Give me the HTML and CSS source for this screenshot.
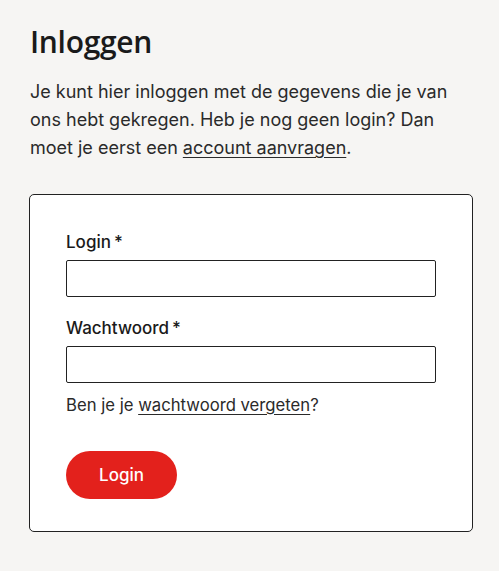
FILE: index.html
```html
<!DOCTYPE html>
<html lang="nl">
<head>
<meta charset="utf-8">
<title>Inloggen</title>
<link rel="stylesheet" href="styles.css">
</head>
<body>
<main class="page">
  <h1 class="title">Inloggen</h1>
  <p class="intro">Je kunt hier inloggen met de gegevens die je van ons hebt gekregen. Heb je nog geen login? Dan moet je eerst een <a href="#" class="link">account aanvragen</a>.</p>
  <form class="card">
    <label class="label" for="login">Login<span class="req">*</span></label>
    <input class="field" id="login" type="text">
    <label class="label label-second" for="pw">Wachtwoord<span class="req">*</span></label>
    <input class="field" id="pw" type="password">
    <p class="forgot">Ben je je <a href="#" class="link">wachtwoord vergeten</a>?</p>
    <button class="btn" type="button">Login</button>
  </form>
</main>
</body>
</html>
```
FILE: styles.css
```css
html, body {
  margin: 0;
  padding: 0;
  background: #f6f5f3;
}
body {
  font-family: Inter, "Noto Sans", sans-serif;
  color: #222;
}
.page {
  padding: 22px 26px 0 30px;
  display: flex;
  flex-direction: column;
}
.title {
  margin: 0;
  font-family: "Open Sans", sans-serif;
  font-weight: 600;
  font-size: 30px;
  line-height: 40px;
  color: #1a1a1a;
  letter-spacing: -0.3px;
}
.intro {
  margin: 16px 0 0;
  max-width: 440px;
  font-size: 18px;
  line-height: 28px;
  color: #2a2a2a;
}
.link {
  color: inherit;
  text-decoration: underline;
  text-underline-offset: 3px;
}
.card {
  margin: 32px 0 0 -1px;
  width: 444px;
  box-sizing: border-box;
  background: #fff;
  border: 1px solid #222;
  border-radius: 5px;
  padding: 36px 36px 32px;
  display: flex;
  flex-direction: column;
}
.label {
  font-size: 17px;
  font-weight: 500;
  line-height: 22px;
  color: #1a1a1a;
  margin-bottom: 7px;
}
.label-second {
  margin-top: 20px;
}
.req {
  margin-left: 3px;
}
.field {
  height: 37px;
  box-sizing: border-box;
  border: 1px solid #222;
  border-radius: 2px;
  background: #fff;
  margin: 0;
  font: inherit;
}
.forgot {
  margin: 10px 0 0;
  font-size: 16.7px;
  line-height: 24px;
  color: #2a2a2a;
}
.btn {
  margin-top: 34px;
  align-self: flex-start;
  width: 111px;
  height: 48px;
  border: 0;
  border-radius: 24px;
  background: #e3211c;
  color: #fff;
  font-family: inherit;
  font-size: 17px;
  font-weight: 500;
}
```
